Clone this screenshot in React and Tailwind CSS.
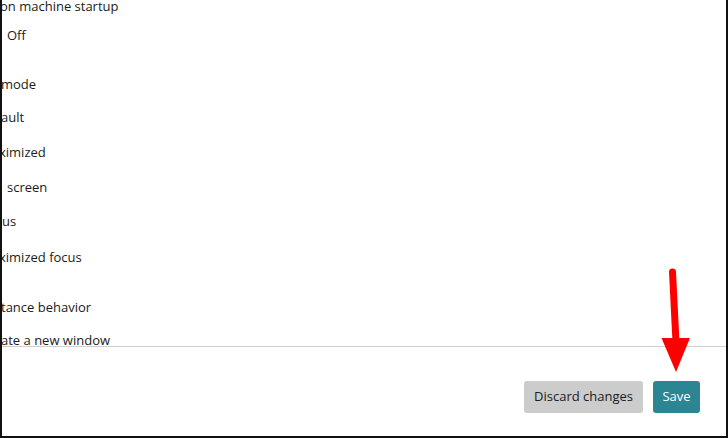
export default function App() {
  const rows = [
    { text: "on machine startup", top: "mt-[-4px]", left: "ml-[-2px]" },
    { text: "Off", top: "mt-[9px]", left: "ml-[5px]" },
    { text: "mode", top: "mt-[29px]", left: "ml-[-1px]" },
    { text: "ault", top: "mt-[13px]", left: "ml-[-1px]" },
    { text: "ximized", top: "mt-[15px]", left: "ml-[-3px]" },
    { text: "screen", top: "mt-[15px]", left: "ml-[5px]" },
    { text: "us", top: "mt-[14px]", left: "ml-[0px]" },
    { text: "ximized focus", top: "mt-[16px]", left: "ml-[-3px]" },
    { text: "tance behavior", top: "mt-[30px]", left: "ml-[-1px]" },
    { text: "ate a new window", top: "mt-[13px]", left: "ml-[-1px]" },
  ];

  return (
    <div
      className="relative w-[728px] h-[438px] bg-white overflow-hidden"
      style={{ fontFamily: '"Open Sans", "Noto Sans", sans-serif' }}
    >
      <div className="flex flex-col h-full border-l-2 border-r-2 border-b-2 border-[#111]">
        {/* settings list, scrolled */}
        <div className="h-[346px] overflow-hidden flex flex-col text-[13px] leading-[20px] text-[#1b1b1b]">
          {rows.map((r, i) => (
            <div key={i} className={`${r.top} ${r.left} whitespace-nowrap`}>
              {r.text}
            </div>
          ))}
        </div>
        <div className="h-px bg-[#cfcfcf]" />

        {/* footer */}
        <div className="flex-1 flex justify-end items-start pt-[34px] pr-[26px] gap-[10px] text-[13px]">
          <button className="h-[32px] w-[119px] rounded-[3px] bg-[#cccccc] text-[#1b1b1b]">
            Discard changes
          </button>
          <button className="h-[32px] w-[47px] rounded-[3px] bg-[#2b8592] text-white">
            Save
          </button>
        </div>
      </div>

      {/* red annotation arrow */}
      <svg className="absolute left-0 top-0 pointer-events-none" width="728" height="438">
        <line x1="672.5" y1="272" x2="676" y2="342" stroke="#ff0000" strokeWidth="7" strokeLinecap="round" />
        <polygon points="661.5,338 690,338 676,372" fill="#ff0000" />
      </svg>
    </div>
  );
}
